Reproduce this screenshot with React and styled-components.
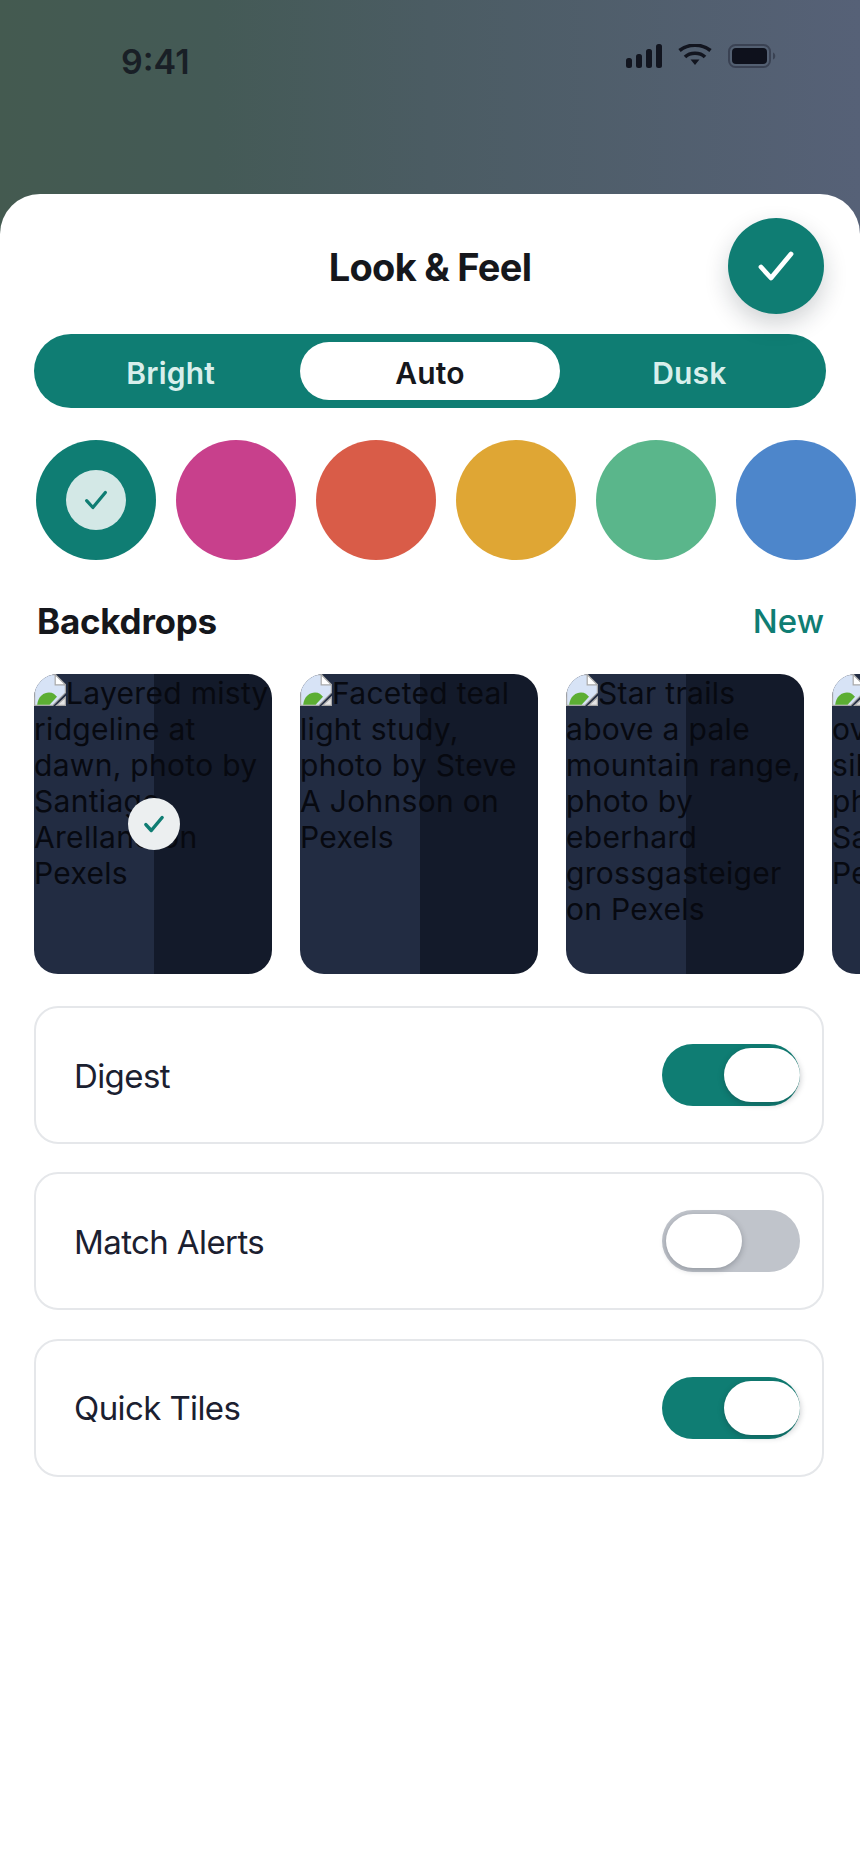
import React from 'react';
import styled, { createGlobalStyle } from 'styled-components';

const teal = '#0f7d73';
const ink = '#15171c';

const Global = createGlobalStyle`
  html, body {
    margin: 0;
    padding: 0;
    width: 860px;
    height: 1864px;
    overflow: hidden;
    background: #fff;
    font-family: Inter, "Liberation Sans", sans-serif;
  }
  * { box-sizing: border-box; }
`;

const Screen = styled.div`
  width: 860px;
  height: 1864px;
  display: flex;
  flex-direction: column;
  overflow: hidden;
  background: linear-gradient(90deg, #445a50 0%, #445a56 25%, #4b5c63 50%, #566177 100%);
`;

const StatusBar = styled.div`
  height: 194px;
  flex: none;
  display: flex;
  justify-content: space-between;
  align-items: flex-start;
  padding: 44px 84px 0 121px;
`;

const Clock = styled.span`
  font-size: 34px;
  line-height: 36px;
  font-weight: 600;
  color: #191f26;
`;

const StatusIcons = styled.div`
  display: flex;
  align-items: flex-start;
  gap: 16px;
`;

const Sheet = styled.div`
  position: relative;
  flex: 1;
  background: #fff;
  border-radius: 40px 40px 0 0;
  padding: 0 34px;
`;

const Header = styled.div`
  height: 140px;
  padding-top: 5px;
  display: flex;
  align-items: center;
  justify-content: center;
`;

const Title = styled.h1`
  margin: 0;
  font-size: 38px;
  font-weight: 700;
  color: ${ink};
  letter-spacing: -0.72px;
`;

const Fab = styled.div`
  position: absolute;
  top: 24px;
  right: 36px;
  width: 96px;
  height: 96px;
  border-radius: 50%;
  background: ${teal};
  display: flex;
  align-items: center;
  justify-content: center;
  box-shadow: 0 10px 24px rgba(20, 30, 40, 0.2);
`;

const Segments = styled.div`
  height: 74px;
  border-radius: 37px;
  background: ${teal};
  padding: 8px 7px;
  display: grid;
  grid-template-columns: repeat(3, 1fr);
`;

const Segment = styled.div`
  border-radius: 29px;
  padding-top: 3px;
  display: flex;
  align-items: center;
  justify-content: center;
  font-size: 30px;
  font-weight: 600;
  letter-spacing: 0.2px;
  color: ${p => (p.$active ? ink : '#d8efec')};
  background: ${p => (p.$active ? '#fff' : 'transparent')};
`;

const Swatches = styled.div`
  display: flex;
  gap: 20px;
  margin: 32px -34px 0 2px;
`;

const Swatch = styled.div`
  width: 120px;
  height: 120px;
  flex: none;
  border-radius: 50%;
  background: ${p => p.$color};
  display: flex;
  align-items: center;
  justify-content: center;
`;

const SwatchMark = styled.div`
  width: 60px;
  height: 60px;
  border-radius: 50%;
  background: #d3e8e6;
  display: flex;
  align-items: center;
  justify-content: center;
`;

const SectionHead = styled.div`
  display: flex;
  justify-content: space-between;
  align-items: center;
  margin: 40px 2px 0 3px;
  height: 42px;
`;

const SectionTitle = styled.h2`
  margin: 0;
  font-size: 35px;
  font-weight: 700;
  color: ${ink};
  letter-spacing: -0.25px;
`;

const NewLink = styled.span`
  font-size: 33px;
  font-weight: 500;
  color: ${teal};
`;

const Backdrops = styled.div`
  display: flex;
  gap: 28px;
  margin: 32px -34px 0 0;
`;

const Backdrop = styled.div`
  position: relative;
  width: 238px;
  height: 300px;
  flex: none;
  border-radius: 24px;
  overflow: hidden;
  background: linear-gradient(90deg, #222c42 0 50.5%, #131a2a 50.5% 100%);
  font-size: 30px;
  line-height: 36px;
  letter-spacing: 0.3px;
  color: #070910;
`;

const BrokenIcon = styled.svg`
  width: 32px;
  height: 32px;
  vertical-align: -2px;
`;

const Badge = styled.div`
  position: absolute;
  top: 124px;
  left: 94px;
  width: 52px;
  height: 52px;
  border-radius: 50%;
  background: #eceff0;
  display: flex;
  align-items: center;
  justify-content: center;
`;

const Rows = styled.div`
  display: flex;
  flex-direction: column;
  gap: 28.3px;
  margin: 32px 2px 0 0;
`;

const Row = styled.div`
  height: 138px;
  border: 2px solid #e5e7ea;
  border-radius: 24px;
  padding: 0 22px 0 38px;
  display: flex;
  align-items: center;
  justify-content: space-between;
`;

const RowLabel = styled.span`
  font-size: 33px;
  letter-spacing: -0.6px;
  padding-top: 1px;
  color: #1b2030;
`;

const Toggle = styled.div`
  position: relative;
  width: 138px;
  height: 62px;
  border-radius: 31px;
  background: ${p => (p.$on ? teal : '#c0c4cb')};
`;

const Knob = styled.div`
  position: absolute;
  top: 4px;
  left: ${p => (p.$on ? '62px' : '4px')};
  width: 76px;
  height: 54px;
  border-radius: 27px;
  background: #fff;
  box-shadow: 0 2px 6px rgba(20, 30, 40, 0.28);
`;

const swatches = ['#0f7d73', '#c8408c', '#d95c48', '#dfa634', '#5ab68b', '#4d86cb'];

const backdrops = [
  { text: 'Layered misty ridgeline at dawn, photo by Santiago Arellano on Pexels', picked: true },
  { text: 'Faceted teal light study, photo by Steve A Johnson on Pexels' },
  { text: 'Star trails above a pale mountain range, photo by eberhard grossgasteiger on Pexels' },
  { text: 'Twilight haze over dark silhouettes, photo by Samantha Ko on Pexels' },
];

const settings = [
  { label: 'Digest', on: true },
  { label: 'Match Alerts', on: false },
  { label: 'Quick Tiles', on: true },
];

const Check = ({ size, color, width }) => (
  <svg width={size} height={size} viewBox="0 0 24 24" fill="none" stroke={color} strokeWidth={width} strokeLinecap="round" strokeLinejoin="round">
    <path d="M4.5 12.5l5 5.5L19.5 6" />
  </svg>
);

// chrome's broken image glyph, doubled
const Broken = () => (
  <BrokenIcon viewBox="0 0 16 16">
    <path d="M0.3 0.3H10.6L15.7 5.4V9.4L9.4 15.7H0.3z" fill="#d7e3f6" stroke="#a9a9a9" strokeWidth="0.6" />
    <path d="M10.6 0.3V5.4H15.7z" fill="#fff" stroke="#a9a9a9" strokeWidth="0.6" />
    <path d="M1.6 15.4C2 11 5 9.2 7.5 9.2c2 0 3 1 4 2.2L7.8 15.4z" fill="#5cae33" />
    <path d="M15.7 11.6v4.1h-4.4z" fill="#e4e4e4" stroke="#a9a9a9" strokeWidth="0.6" />
  </BrokenIcon>
);

export default function App() {
  return (
    <Screen>
      <Global />
      <StatusBar>
        <Clock>9:41</Clock>
        <StatusIcons>
          <svg width="36" height="24" viewBox="0 0 36 24" fill="#12151f">
            <rect x="0" y="14" width="6" height="10" rx="2.5" />
            <rect x="10" y="10" width="6" height="14" rx="2.5" />
            <rect x="20" y="5" width="6" height="19" rx="2.5" />
            <rect x="30" y="0" width="6" height="24" rx="2.5" />
          </svg>
          <svg width="34" height="22" viewBox="0 0 34 22" fill="none" stroke="#12151f" strokeWidth="3.6">
            <path d="M1.5 6.5C10 -0.5 24 -0.5 32.5 6.5" />
            <path d="M7 13C12 8 22 8 27 13" />
            <path d="M12.5 15.5h9L17 21z" fill="#12151f" stroke="none" />
          </svg>
          <svg width="48" height="24" viewBox="0 0 48 24">
            <rect x="1" y="1" width="41" height="22" rx="6.5" fill="none" stroke="#3a4253" strokeWidth="2" />
            <rect x="4" y="4" width="35" height="16" rx="4" fill="#0e111c" />
            <path d="M45 8.5c3 1 3 6 0 7z" fill="#3a4253" />
          </svg>
        </StatusIcons>
      </StatusBar>
      <Sheet>
        <Header>
          <Title>Look &amp; Feel</Title>
        </Header>
        <Fab>
          <Check size={48} color="#fff" width={2.4} />
        </Fab>
        <Segments>
          <Segment>Bright</Segment>
          <Segment $active>Auto</Segment>
          <Segment>Dusk</Segment>
        </Segments>
        <Swatches>
          {swatches.map((c, i) => (
            <Swatch key={c} $color={c}>
              {i === 0 && (
                <SwatchMark>
                  <Check size={30} color={teal} width={2.6} />
                </SwatchMark>
              )}
            </Swatch>
          ))}
        </Swatches>
        <SectionHead>
          <SectionTitle>Backdrops</SectionTitle>
          <NewLink>New</NewLink>
        </SectionHead>
        <Backdrops>
          {backdrops.map(b => (
            <Backdrop key={b.text}>
              <Broken />
              {b.text}
              {b.picked && (
                <Badge>
                  <Check size={26} color={teal} width={3.2} />
                </Badge>
              )}
            </Backdrop>
          ))}
        </Backdrops>
        <Rows>
          {settings.map(s => (
            <Row key={s.label}>
              <RowLabel>{s.label}</RowLabel>
              <Toggle $on={s.on}>
                <Knob $on={s.on} />
              </Toggle>
            </Row>
          ))}
        </Rows>
      </Sheet>
    </Screen>
  );
}
